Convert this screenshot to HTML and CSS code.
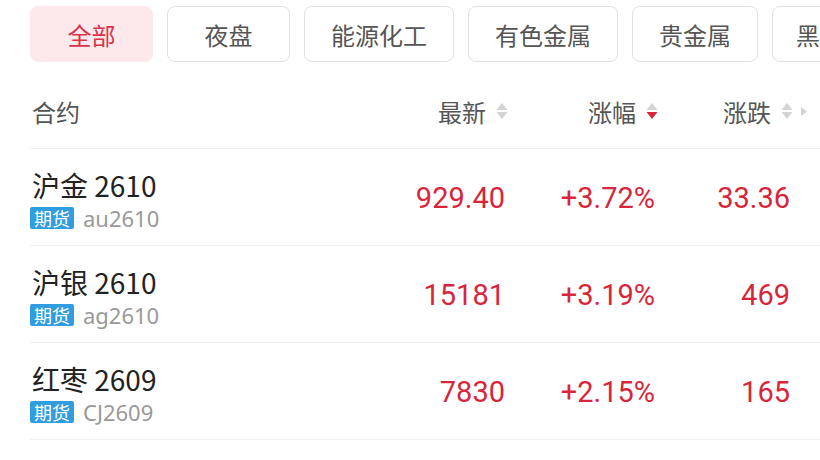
FILE: index.html
```html
<!DOCTYPE html>
<html lang="zh">
<head>
<meta charset="utf-8">
<link rel="stylesheet" href="styles.css">
</head>
<body>
<div class="tabs">
  <div class="tab active">全部</div>
  <div class="tab">夜盘</div>
  <div class="tab">能源化工</div>
  <div class="tab">有色金属</div>
  <div class="tab">贵金属</div>
  <div class="tab">黑色金属</div>
</div>
<div class="list">
  <div class="row head">
    <div class="c-name">合约</div>
    <div class="c-num"><span>最新</span><svg class="sort" viewBox="0 0 12 18"><path d="M6 1L11.5 8H0.5Z" fill="#d4d4d4"/><path d="M6 17L11.5 10H0.5Z" fill="#d4d4d4"/></svg></div>
    <div class="c-num"><span>涨幅</span><svg class="sort" viewBox="0 0 12 18"><path d="M6 1L11.5 8H0.5Z" fill="#d4d4d4"/><path d="M6 17L11.5 10H0.5Z" fill="#d7263c"/></svg></div>
    <div class="c-num"><span>涨跌</span><svg class="sort" viewBox="0 0 12 18"><path d="M6 1L11.5 8H0.5Z" fill="#d4d4d4"/><path d="M6 17L11.5 10H0.5Z" fill="#d4d4d4"/></svg></div>
    <div class="c-more"><svg class="more" viewBox="0 0 6 9"><path d="M0 0L6 4.5L0 9Z" fill="#d4d4d4"/></svg></div>
  </div>
  <div class="row item">
    <div class="c-name">
      <div class="name">沪金 2610</div>
      <div class="sub"><span class="badge">期货</span><span class="code">au2610</span></div>
    </div>
    <div class="c-val">929.40</div>
    <div class="c-val">+3.72%</div>
    <div class="c-val">33.36</div>
    <div></div>
  </div>
  <div class="row item">
    <div class="c-name">
      <div class="name">沪银 2610</div>
      <div class="sub"><span class="badge">期货</span><span class="code">ag2610</span></div>
    </div>
    <div class="c-val">15181</div>
    <div class="c-val">+3.19%</div>
    <div class="c-val">469</div>
    <div></div>
  </div>
  <div class="row item">
    <div class="c-name">
      <div class="name">红枣 2609</div>
      <div class="sub"><span class="badge">期货</span><span class="code">CJ2609</span></div>
    </div>
    <div class="c-val">7830</div>
    <div class="c-val">+2.15%</div>
    <div class="c-val">165</div>
    <div></div>
  </div>
</div>
</body>
</html>
```
FILE: styles.css
```css
* { box-sizing: border-box; }
html, body { margin: 0; padding: 0; background: #fff; }
body {
  width: 820px;
  height: 460px;
  overflow: hidden;
  font-family: "Noto Sans CJK SC", "Noto Sans", sans-serif;
  padding-top: 6px;
}
.tabs {
  display: flex;
  gap: 14px;
  padding-left: 30px;
  white-space: nowrap;
  overflow: hidden;
}
.tab {
  flex: none;
  height: 56px;
  min-width: 123px;
  padding: 0 26px;
  border: 1px solid #e2e2e2;
  border-radius: 8px;
  display: flex;
  align-items: center;
  justify-content: center;
  font-size: 24px;
  color: #555;
}
.tab:last-child { padding-left: 23px; }
.tab.active {
  background: #fde8eb;
  border-color: #fde8eb;
  color: #d7334a;
}
.list {
  padding-left: 30px;
}
.row {
  display: grid;
  grid-template-columns: 1fr 150px 150px 135px 27px;
  border-bottom: 1px solid #f0f0f0;
}
.head {
  height: 87px;
  padding-top: 12px;
  align-items: center;
  font-size: 24px;
  color: #555;
}
.c-name { padding-left: 2px; }
.c-num {
  display: flex;
  align-items: center;
  justify-content: flex-end;
  gap: 10px;
}
.sort { width: 12px; height: 18px; display: block; }
.c-more { display: flex; align-items: center; padding-left: 8px; }
.more { width: 6px; height: 9px; display: block; }
.item {
  height: 97px;
  padding-top: 19px;
}
.name {
  font-size: 28px;
  line-height: 34px;
  color: #222;
}
.sub {
  margin-top: 5px;
  display: flex;
  align-items: center;
  margin-left: -2px;
}
.badge {
  background: #2f9de0;
  color: #fff;
  font-size: 18px;
  line-height: 22px;
  height: 22px;
  padding: 0 4px;
  border-radius: 2px;
}
.code {
  margin-left: 9px;
  font-family: "Noto Sans", sans-serif;
  font-size: 22px;
  line-height: 22px;
  color: #999;
}
.c-val {
  text-align: right;
  padding-right: 3px;
  padding-top: 13px;
  font-family: Roboto, "Noto Sans", sans-serif;
  font-size: 29px;
  line-height: 34px;
  color: #d7263c;
}
```
